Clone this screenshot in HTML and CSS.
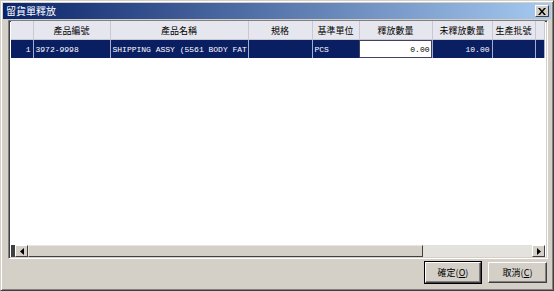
FILE: index.html
```html
<!DOCTYPE html>
<html lang="zh-Hant">
<head>
    <meta charset="UTF-8"/>
    <title>留貨單釋放</title>
    <link rel="stylesheet" href="styles.css">
</head>
<body>
<div class="window">
    <div class="titlebar">
        <span class="titlebar__text">留貨單釋放</span>
        <span class="titlebar__close">
            <svg width="8" height="7" viewBox="0 0 8 7"><path d="M0 0h2l2 2.5 2-2.5h2l-3 3.5 3 3.5h-2l-2-2.5-2 2.5h-2l3-3.5z" fill="#000"/></svg>
        </span>
    </div>

    <div class="grid">
        <table class="grid__table">
            <colgroup>
                <col style="width:22px">
                <col style="width:77px">
                <col style="width:138px">
                <col style="width:64px">
                <col style="width:47px">
                <col style="width:73px">
                <col style="width:60px">
                <col style="width:43px">
                <col>
            </colgroup>
            <thead>
            <tr>
                <th></th>
                <th>產品編號</th>
                <th>產品名稱</th>
                <th>規格</th>
                <th>基準單位</th>
                <th>釋放數量</th>
                <th>未釋放數量</th>
                <th>生產批號</th>
                <th></th>
            </tr>
            </thead>
            <tbody>
            <tr class="row--selected">
                <td class="num">1</td>
                <td>3972-9998</td>
                <td>SHIPPING ASSY (5561 BODY FAT</td>
                <td></td>
                <td>PCS</td>
                <td class="num cell--edit">0.00</td>
                <td class="num">10.00</td>
                <td></td>
                <td></td>
            </tr>
            </tbody>
        </table>
        <div class="grid__empty"></div>
        <div class="hscroll">
            <span class="hscroll__corner"></span>
            <span class="hscroll__btn">
                <svg width="4" height="7" viewBox="0 0 4 7"><path d="M4 0v7L0 3.5z" fill="#000"/></svg>
            </span>
            <span class="hscroll__thumb"></span>
            <span class="hscroll__track"></span>
            <span class="hscroll__btn">
                <svg width="4" height="7" viewBox="0 0 4 7"><path d="M0 0v7l4-3.5z" fill="#000"/></svg>
            </span>
        </div>
    </div>

    <div class="buttons">
        <button class="btn btn--default">確定(<u>O</u>)</button>
        <button class="btn btn--wide">取消(<u>C</u>)</button>
    </div>
</div>
</body>
</html>
```

FILE: styles.css
```css
body {
    margin: 0;
    font-family: "Noto Sans CJK TC", sans-serif;
}

.window {
    width: 554px;
    height: 291px;
    box-sizing: border-box;
    background: #d4d0c8;
    border: 1px solid;
    border-color: #d4d0c8 #404040 #404040 #d4d0c8;
    box-shadow: inset 1px 1px #fff, inset -1px -1px #808080;
    padding: 2px;
    display: flex;
    flex-direction: column;
}

.titlebar {
    height: 16px;
    display: flex;
    align-items: center;
    justify-content: space-between;
    padding: 0 2px 0 3px;
    background: linear-gradient(to right, #0a246a, #a6caf0);
}

.titlebar__text {
    color: #fff;
    font-size: 10px;
    line-height: 16px;
}

.titlebar__close {
    width: 14px;
    height: 12px;
    box-sizing: border-box;
    background: #d4d0c8;
    border: 1px solid;
    border-color: #fff #404040 #404040 #fff;
    display: flex;
    align-items: center;
    justify-content: center;
}

.grid {
    margin: 1px 3px 0 5px;
    height: 239px;
    box-sizing: border-box;
    border: 1px solid;
    border-color: #808080 #fff #fff #808080;
    box-shadow: inset 1px 1px #404040, inset -1px -1px #d4d0c8;
    padding: 0 2px 1px 2px;
    background: #fff;
    display: flex;
    flex-direction: column;
}

.grid__table {
    width: 100%;
    table-layout: fixed;
    border-collapse: collapse;
}

.grid__table th {
    height: 18px;
    padding: 0 3px;
    background: #e6e6ee;
    border-right: 1px solid #c8c8d4;
    border-bottom: 1px solid #c8c8d4;
    font-size: 9px;
    font-weight: normal;
    color: #000;
    text-align: center;
    white-space: nowrap;
    overflow: hidden;
}

.grid__table td {
    height: 18px;
    padding: 0 2px;
    border-right: 1px solid #a8acd0;
    font-family: "Liberation Mono", monospace;
    font-size: 8px;
    white-space: nowrap;
    overflow: hidden;
}

.row--selected td {
    background: #0a1e62;
    color: #fff;
}

.grid__table .num {
    text-align: right;
}

.grid__table .cell--edit {
    background: #fff;
    color: #000;
    outline: 1px solid #404060;
    outline-offset: -1px;
}

.grid__empty {
    flex: 1;
}

.hscroll {
    height: 12px;
    display: flex;
    background: #e4e2dc;
}

.hscroll__corner {
    width: 4px;
    background: #404040;
}

.hscroll__btn {
    width: 13px;
    box-sizing: border-box;
    background: #d4d0c8;
    border: 1px solid;
    border-color: #fff #404040 #404040 #fff;
    display: flex;
    align-items: center;
    justify-content: center;
}

.hscroll__thumb {
    width: 395px;
    box-sizing: border-box;
    background: #d4d0c8;
    border: 1px solid;
    border-color: #e8e6e0 #404040 #404040 #e8e6e0;
}

.hscroll__track {
    flex: 1;
}

.buttons {
    display: flex;
    justify-content: flex-end;
    gap: 7px;
    margin: 3px 4px 0 0;
}

.btn {
    width: 56px;
    height: 21px;
    padding: 0;
    background: #d4d0c8;
    border: 1px solid;
    border-color: #fff #404040 #404040 #fff;
    box-shadow: inset -1px -1px #808080;
    font-family: "Noto Sans CJK TC", sans-serif;
    font-size: 9px;
    color: #000;
}

.btn--default {
    outline: 1px solid #000;
}

.btn--wide {
    width: 59px;
}
```
